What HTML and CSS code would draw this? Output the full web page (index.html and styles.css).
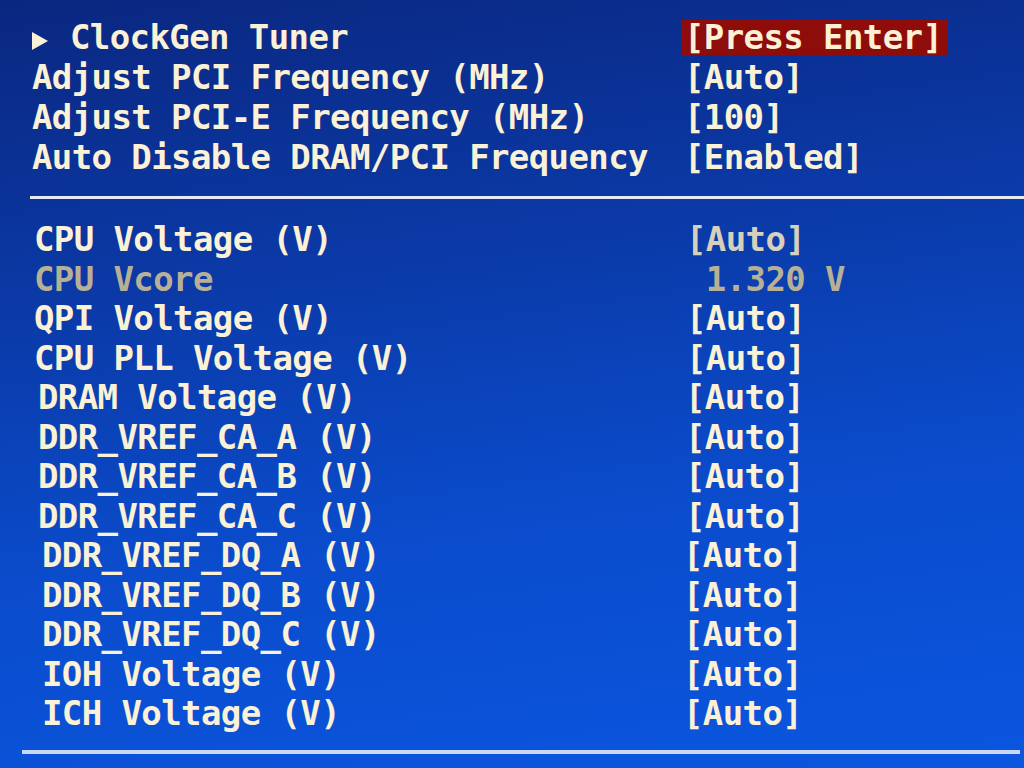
FILE: index.html
```html
<!DOCTYPE html>
<html lang="en">
<head>
	<meta charset="UTF-8">
	<title>ClockGen</title>
	<link rel="stylesheet" href="styles.css">
</head>
<body>
	<div class="screen">
		<div class="group top">
			<div class="row"><span class="label"><svg class="arrow" width="16" height="18" viewBox="0 0 16 18"><polygon points="0,0 16,9 0,18" fill="#fbf1d6"/></svg><span class="gap">  </span>ClockGen Tuner</span><span class="value"><span class="sel">[Press Enter]</span></span></div>
			<div class="row"><span class="label">Adjust PCI Frequency (MHz)</span><span class="value">[Auto]</span></div>
			<div class="row"><span class="label">Adjust PCI-E Frequency (MHz)</span><span class="value">[100]</span></div>
			<div class="row"><span class="label">Auto Disable DRAM/PCI Frequency</span><span class="value">[Enabled]</span></div>
		</div>
		<div class="rule"></div>
		<div class="group volt">
			<div class="row"><span class="label">CPU Voltage (V)</span><span class="value dim">[Auto]</span></div>
			<div class="row"><span class="label grey">CPU Vcore</span><span class="value grey"> 1.320 V</span></div>
			<div class="row"><span class="label">QPI Voltage (V)</span><span class="value">[Auto]</span></div>
			<div class="row"><span class="label">CPU PLL Voltage (V)</span><span class="value">[Auto]</span></div>
			<div class="row s1"><span class="label">DRAM Voltage (V)</span><span class="value">[Auto]</span></div>
			<div class="row s1"><span class="label">DDR_VREF_CA_A (V)</span><span class="value">[Auto]</span></div>
			<div class="row s1"><span class="label">DDR_VREF_CA_B (V)</span><span class="value">[Auto]</span></div>
			<div class="row s1"><span class="label">DDR_VREF_CA_C (V)</span><span class="value">[Auto]</span></div>
			<div class="row s2"><span class="label">DDR_VREF_DQ_A (V)</span><span class="value">[Auto]</span></div>
			<div class="row s2"><span class="label">DDR_VREF_DQ_B (V)</span><span class="value">[Auto]</span></div>
			<div class="row s2"><span class="label">DDR_VREF_DQ_C (V)</span><span class="value">[Auto]</span></div>
			<div class="row s2"><span class="label">IOH Voltage (V)</span><span class="value">[Auto]</span></div>
			<div class="row s2"><span class="label">ICH Voltage (V)</span><span class="value">[Auto]</span></div>
		</div>
		<div class="rule bottom"></div>
	</div>
</body>
</html>
```

FILE: styles.css
```css
html, body {
	margin: 0px;
	height: 100%;
}
body {
	background: linear-gradient(172deg, #0a2780 0%, #0b3aa8 35%, #0a4ccc 65%, #0b56e0 100%);
	color: #fbf1d6;
	font-family: "DejaVu Sans Mono", "Liberation Mono", monospace;
	font-weight: bold;
	font-size: 34px;
	letter-spacing: -0.6px;
	overflow: hidden;
}
.screen {
	padding: 17px 0px 0px 0px;
}
.group {
	padding-left: 32px;
}
.row {
	display: grid;
	grid-template-columns: 652px 1fr;
	height: 40px;
	line-height: 40px;
	white-space: pre;
}
.arrow {
	vertical-align: -1px;
}
.gap {
	display: inline-block;
	width: 22px;
}
.sel {
	display: inline-block;
	background: #8e0c0a;
	line-height: 35px;
	height: 35px;
	margin: 3px 0px 0px -3px;
	padding: 0px 6px 0px 3px;
}
.rule {
	height: 3px;
	background: #e6e8f2;
	margin: 19px 0px 20px 30px;
}
.volt {
	padding-left: 34px;
}
.volt .row {
	height: 39.5px;
	line-height: 41px;
}
.volt .s1 {
	padding-left: 4px;
	grid-template-columns: 647px 1fr;
}
.volt .s2 {
	padding-left: 8px;
	grid-template-columns: 641px 1fr;
}
.dim {
	color: #d8d0bc;
}
.grey {
	color: #b8b096;
}
.rule.bottom {
	height: 4px;
	background: #c9d8f6;
	margin: 17px 4px 0px 22px;
}
```
